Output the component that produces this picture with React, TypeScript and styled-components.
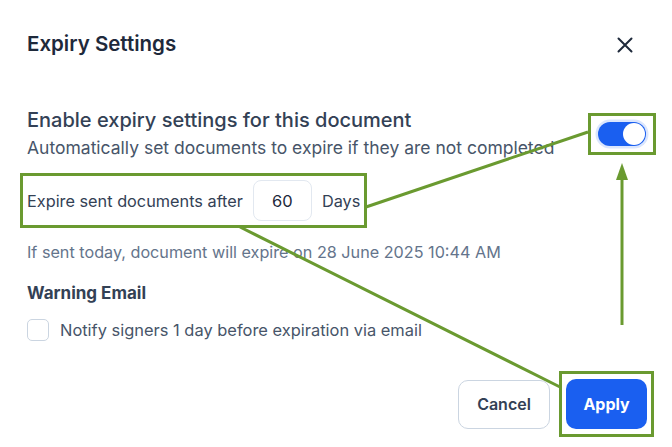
import React from 'react';
import styled, { createGlobalStyle } from 'styled-components';

const GlobalStyle = createGlobalStyle`
  html, body {
    margin: 0;
    padding: 0;
    background: #ffffff;
  }
  body {
    font-family: Inter, "Noto Sans", "Liberation Sans", sans-serif;
  }
`;

const GREEN = '#6a9a30';

/** 有効期限設定ダイアログ */
const App: React.FC = () => {
  return (
    <Dialog>
      <GlobalStyle />
      <Header>
        <Title>Expiry Settings</Title>
        <CloseButton aria-label="Close">
          <svg width="16" height="16" viewBox="0 0 16 16">
            <path d="M1.5 1.5 L14.5 14.5 M14.5 1.5 L1.5 14.5" stroke="#1e293b" strokeWidth="2" strokeLinecap="round" />
          </svg>
        </CloseButton>
      </Header>

      <SettingRow>
        <SettingText>
          <SettingTitle>Enable expiry settings for this document</SettingTitle>
          <SettingHint>Automatically set documents to expire if they are not completed</SettingHint>
        </SettingText>
        <Marked $x={7} $y={6}>
          <Switch $on>
            <Thumb />
          </Switch>
        </Marked>
      </SettingRow>

      <ExpireRow>
        <Label>Expire sent documents after</Label>
        <DaysInput value="60" readOnly />
        <Label>Days</Label>
      </ExpireRow>

      <Note>If sent today, document will expire on 28 June 2025 10:44 AM</Note>

      <SectionTitle>Warning Email</SectionTitle>
      <CheckRow>
        <CheckBox />
        <CheckLabel>Notify signers 1 day before expiration via email</CheckLabel>
      </CheckRow>

      <Footer>
        <CancelButton>Cancel</CancelButton>
        <Marked $x={4} $y={5}>
          <ApplyButton>Apply</ApplyButton>
        </Marked>
      </Footer>

      <Annotations width="672" height="447" viewBox="0 0 672 447">
        <line x1="366" y1="207" x2="588" y2="132" stroke={GREEN} strokeWidth="3" />
        <line x1="240" y1="227" x2="560" y2="387" stroke={GREEN} strokeWidth="3" />
        <line x1="622" y1="325" x2="622" y2="176" stroke={GREEN} strokeWidth="3" />
        <polygon points="622,163 616,180 628,180" fill={GREEN} />
      </Annotations>
    </Dialog>
  );
};

// styles
const Dialog = styled.div`
  position: relative;
  width: 672px;
  height: 447px;
  box-sizing: border-box;
  padding: 32px 25px 0 27px;
  background: #ffffff;
  overflow: hidden;
`;

const Header = styled.div`
  display: flex;
  align-items: center;
  justify-content: space-between;
  height: 24px;
  padding-right: 14px;
`;

const Title = styled.h2`
  margin: 0;
  font-size: 20.5px;
  line-height: 24px;
  font-weight: 600;
  color: #1e293b;
`;

const CloseButton = styled.button`
  display: flex;
  align-items: center;
  justify-content: center;
  padding: 0;
  margin-top: 2px;
  border: none;
  background: none;
`;

const SettingRow = styled.div`
  display: flex;
  align-items: center;
  justify-content: space-between;
  margin-top: 52px;
  padding-right: 1px;
`;

const SettingText = styled.div`
  display: flex;
  flex-direction: column;
  gap: 5px;
`;

const SettingTitle = styled.div`
  font-size: 20px;
  line-height: 24px;
  font-weight: 500;
  color: #334155;
`;

const SettingHint = styled.div`
  font-size: 17.5px;
  line-height: 22px;
  color: #475569;
`;

const Marked = styled.div<{ $x: number; $y: number }>`
  display: flex;
  outline: 3px solid ${GREEN};
  outline-offset: 0;
  padding: ${(p) => p.$y}px ${(p) => p.$x}px;
  margin: -${(p) => p.$y}px -${(p) => p.$x}px;
`;

const Switch = styled.div<{ $on?: boolean }>`
  display: flex;
  align-items: center;
  justify-content: ${(p) => (p.$on ? 'flex-end' : 'flex-start')};
  width: 48px;
  height: 24px;
  padding: 1px;
  box-sizing: border-box;
  border-radius: 12px;
  background: ${(p) => (p.$on ? '#1a5ff0' : '#cbd5e1')};
  box-shadow: 0 0 0 2.5px #dbe6fd;
`;

const Thumb = styled.div`
  width: 22px;
  height: 22px;
  border-radius: 50%;
  background: #ffffff;
`;

const ExpireRow = styled.div`
  display: flex;
  align-items: center;
  gap: 10px;
  width: max-content;
  margin-top: 21px;
  outline: 3px solid ${GREEN};
  outline-offset: 4px;
`;

const Label = styled.span`
  font-size: 16.3px;
  line-height: 22px;
  color: #334155;
`;

const DaysInput = styled.input`
  width: 59px;
  height: 41px;
  box-sizing: border-box;
  border: 1px solid #e2e8f0;
  border-radius: 8px;
  text-align: center;
  font-family: inherit;
  font-size: 16.5px;
  color: #1e293b;
  outline: none;
`;

const Note = styled.div`
  margin-top: 20px;
  font-size: 16.2px;
  line-height: 22px;
  color: #64748b;
`;

const SectionTitle = styled.div`
  margin-top: 19px;
  font-size: 17px;
  line-height: 22px;
  font-weight: 700;
  color: #334155;
`;

const CheckRow = styled.label`
  display: flex;
  align-items: center;
  gap: 11px;
  margin-top: 15px;
`;

const CheckBox = styled.span`
  width: 22px;
  height: 22px;
  box-sizing: border-box;
  border: 1px solid #cbd5e1;
  border-radius: 5px;
  background: #ffffff;
`;

const CheckLabel = styled.span`
  font-size: 16.45px;
  line-height: 22px;
  color: #475569;
`;

const Footer = styled.div`
  display: flex;
  justify-content: flex-end;
  align-items: center;
  gap: 16px;
  margin-top: 38px;
`;

const CancelButton = styled.button`
  width: 92px;
  height: 49px;
  border: 1px solid #cbd5e1;
  border-radius: 10px;
  background: #ffffff;
  font-family: inherit;
  font-size: 16px;
  font-weight: 600;
  color: #334155;
`;

const ApplyButton = styled.button`
  width: 81px;
  height: 50px;
  border: none;
  border-radius: 10px;
  background: #1a5ff0;
  font-family: inherit;
  font-size: 16px;
  font-weight: 700;
  color: #ffffff;
`;

const Annotations = styled.svg`
  position: absolute;
  top: 0;
  left: 0;
  pointer-events: none;
`;

export default App;
